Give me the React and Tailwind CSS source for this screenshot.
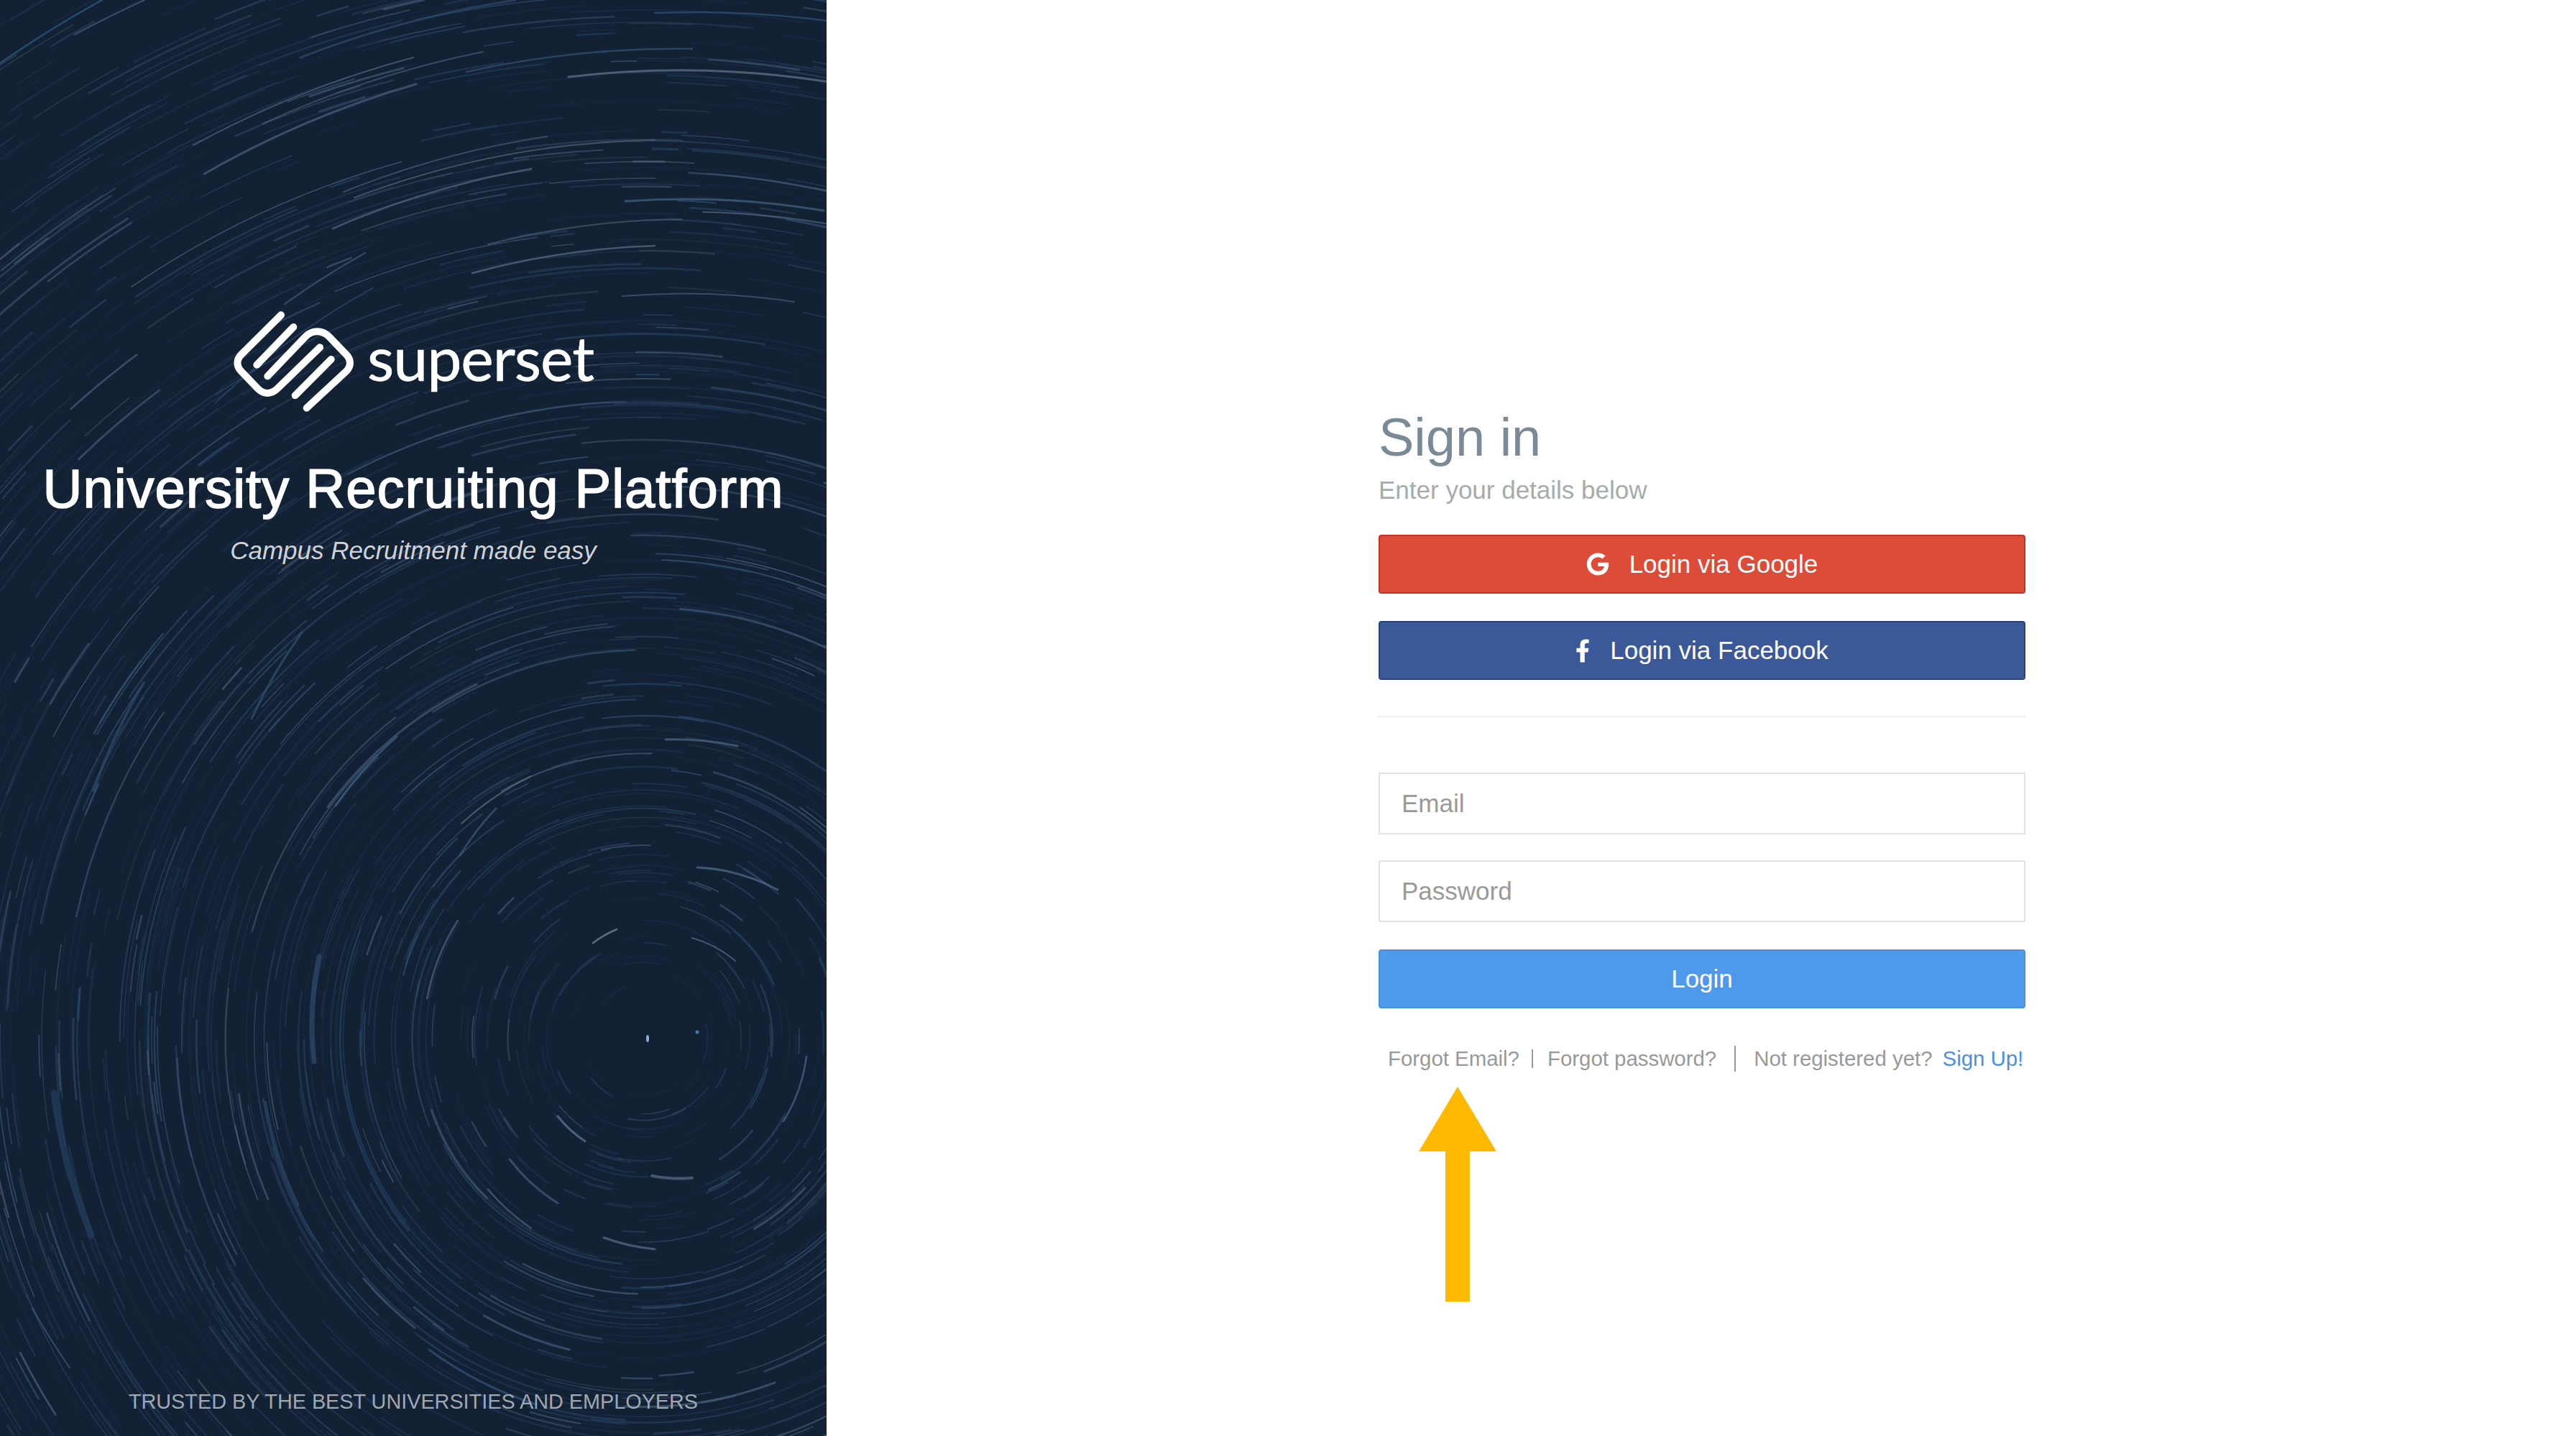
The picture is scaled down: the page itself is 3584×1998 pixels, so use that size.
import React from "react";
import { FaGoogle, FaFacebookF } from "react-icons/fa";

const CX = 895;
const CY = 1445;

const HAND = [
  [0,88,142,0,"#2f5f86",2.5],[104,48,201,0,"#47627c",2],[418,80,717,0,"#2f4a6c",3],[534,13,590,0,"#3f5674",3],
  [269,202,575,80,"#56677c",2],[366,172,672,72,"#4b5d73",2],[284,242,579,117,"#4c6280",3],[791,107,1160,115,"#66788c",3],
  [649,100,963,68,"#345273",2.5],[911,18,1160,30,"#2f5375",2.5],[478,267,761,190,"#4a5d76",2],[493,275,911,195,"#5a6775",2],
  [463,318,739,235,"#5a6a7e",2.5],[870,280,1146,293,"#466583",3],[978,295,1160,313,"#5a6b7f",2],[657,380,911,342,"#5e7086",2.5],
  [679,340,948,305,"#4a5c70",2],[396,423,508,352,"#3d5a7c",2.5],[866,412,1105,420,"#4a5f78",2],[300,560,520,400,"#2c4a6e",2],
  [467,1121,552,1025,"#3f6488",3],[642,1146,739,1080,"#60707c",2],[926,1029,1026,1038,"#4f6a88",3],[825,1312,858,1293,"#7c8da0",2.5],
  [776,1553,814,1588,"#5f7a98",3],[679,1655,739,1709,"#4c6585",2.5],[709,1613,776,1674,"#45607f",3],[840,1722,911,1738,"#5d7189",3],
  [907,1636,963,1639,"#5b6f88",4],[970,1207,1082,1238,"#54708f",3],[963,1305,1023,1337,"#5b7592",2],[597,1878,746,1954,"#34557a",3],
  [45,1820,97,1903,"#3f5d7f",2],[444,1331,437,1477,"#2f4c6e",7],[75,1521,127,1719,"#25405f",9],
  [1122,1470,1090,1560,"#4c6a8a",2.5],[640,1190,690,1125,"#3a5878",3],[350,1000,420,880,"#34536f",3],[130,1100,200,950,"#2e4c6b",4],
];

function arc(x1, y1, x2, y2) {
  const mx = (x1 + x2) / 2;
  const my = (y1 + y2) / 2;
  const r = Math.hypot(mx - CX, my - CY);
  const sweep = (x1 - CX) * (y2 - CY) - (y1 - CY) * (x2 - CX) > 0 ? 1 : 0;
  return `M${x1} ${y1}A${r.toFixed(1)} ${r.toFixed(1)} 0 0 ${sweep} ${x2} ${y2}`;
}

function randomTrails() {
  let seed = 20231;
  const rnd = () => {
    seed = (seed * 16807) % 2147483647;
    return seed / 2147483647;
  };
  const colors = ["#2c4a6e", "#34557a", "#3f5f84", "#4a6585", "#5a6f86", "#27486c"];
  const out = [];
  for (let i = 0; i < 6000; i++) {
    const r = 60 + Math.pow(rnd(), 0.6) * 1850;
    const a = rnd() * Math.PI * 2;
    const len = 30 + rnd() * rnd() * (r < 300 ? 120 : 420);
    const d = len / r;
    const x1 = CX + r * Math.cos(a);
    const y1 = CY + r * Math.sin(a);
    const x2 = CX + r * Math.cos(a + d);
    const y2 = CY + r * Math.sin(a + d);
    const bright = rnd();
    if ((x1 < -50 && x2 < -50) || (x1 > 1200 && x2 > 1200) || (y1 < -50 && y2 < -50) || (y1 > 2050 && y2 > 2050)) continue;
    out.push({
      d: `M${x1.toFixed(1)} ${y1.toFixed(1)}A${r.toFixed(1)} ${r.toFixed(1)} 0 0 1 ${x2.toFixed(1)} ${y2.toFixed(1)}`,
      c: colors[Math.floor(rnd() * colors.length)],
      w: 1.2 + rnd() * 1.8,
      o: (0.1 + bright * bright * 0.5) * Math.min(1, r / 350 + 0.35),
    });
  }
  return out;
}

function StarTrails() {
  const trails = React.useMemo(randomTrails, []);
  return (
    <svg className="absolute inset-0 w-full h-full blur-[0.7px]" viewBox="0 0 1150 1998" preserveAspectRatio="none">
      {trails.map((t, i) => (
        <path key={i} d={t.d} fill="none" stroke={t.c} strokeWidth={t.w} strokeOpacity={t.o} strokeLinecap="round" />
      ))}
      {HAND.map((h, i) => (
        <path key={`h${i}`} d={arc(h[0], h[1], h[2], h[3])} fill="none" stroke={h[4]} strokeWidth={h[5]} strokeLinecap="round" strokeOpacity="0.7" />
      ))}
      <ellipse cx="901" cy="1445" rx="2" ry="5" fill="#8fb0d8" />
      <circle cx="970" cy="1436" r="2.5" fill="#4f78a8" />
    </svg>
  );
}

function Logo() {
  return (
    <svg width="180" height="155" viewBox="0 0 540 465" fill="none" stroke="#fff" strokeWidth="30" strokeLinecap="round" strokeLinejoin="round" className="shrink-0">
      <path d="M213 40 L47 205 C26 226 26 254 47 275 L112 343 C140 373 172 373 200 345 L375 175" />
      <path d="M157 295 L315 130 C343 102 385 102 413 130 L485 205 C506 226 506 254 485 275 L320 428" />
      <path d="M265 90 L112 248" />
      <path d="M422 225 L272 376" />
    </svg>
  );
}

export default function App() {
  return (
    <div className="flex w-full h-[1998px] bg-white font-['Liberation_Sans',sans-serif] overflow-hidden">
      <aside className="relative w-[1150px] h-full shrink-0 overflow-hidden bg-[#122134] flex flex-col items-center text-white">
        <StarTrails />
        <div className="relative flex items-center gap-[11px] mt-[425px] mr-[4px] h-[155px]">
          <Logo />
          <span className="font-['Lato',sans-serif] text-[86px] leading-none tracking-[-1px] -mt-[12px] [-webkit-text-stroke:0.6px_white]">superset</span>
        </div>
        <h1 className="relative mt-[55px] text-[76px] leading-[90px] tracking-[1px] [-webkit-text-stroke:1.6px_white]">University Recruiting Platform</h1>
        <p className="relative mt-[19px] italic text-[35px] leading-[44px] text-[#cfd2d6]">Campus Recruitment made easy</p>
        <p className="relative mt-auto mb-[29px] text-[28.8px] leading-[38px] text-[#a0a7b0]">TRUSTED BY THE BEST UNIVERSITIES AND EMPLOYERS</p>
      </aside>
      <main className="flex-1 pl-[768px]">
        <div className="w-[900px] pt-[569px]">
          <h2 className="h-[80px] text-[74px] leading-[80px] text-[#7b8a97]">Sign in</h2>
          <p className="mt-[11px] h-[44px] text-[35px] leading-[44px] text-[#a6abab]">Enter your details below</p>
          <button className="mt-[40px] w-full h-[82px] flex items-center justify-center gap-[28px] rounded-[4px] border-2 border-[#c23321] bg-[#dd4b39] text-white text-[35px]">
            <FaGoogle className="w-[32px] h-[32px]" />
            <span>Login via Google</span>
          </button>
          <button className="mt-[38px] w-full h-[82px] flex items-center justify-center gap-[28px] rounded-[4px] border-2 border-[#2d4373] bg-[#3b5998] text-white text-[35px]">
            <FaFacebookF className="w-[20px] h-[35px]" />
            <span>Login via Facebook</span>
          </button>
          <hr className="mt-[50px] border-0 h-[2px] bg-[#eeeeee]" />
          <input placeholder="Email" className="mt-[77px] block w-full h-[86px] border-2 border-[#e3e3e3] bg-white px-[30px] text-[35px] placeholder:text-[#999999] outline-none" />
          <input placeholder="Password" className="mt-[36px] block w-full h-[86px] border-2 border-[#e3e3e3] bg-white px-[30px] text-[35px] placeholder:text-[#999999] outline-none" />
          <button className="mt-[38px] w-full h-[82px] rounded-[4px] border-2 border-[#4a90e2] bg-[#4f99ed] text-white text-[35px]">Login</button>
          <div className="mt-[50px] flex items-center h-[40px] text-[29.4px] leading-[40px] text-[#999999] whitespace-nowrap">
            <span className="ml-[13px]">Forgot Email?</span>
            <span className="ml-[17px] w-[2px] h-[26px] bg-[#999999]" />
            <span className="ml-[20px]">Forgot password?</span>
            <span className="ml-[25px] w-[2px] h-[36px] bg-[#999999]" />
            <span className="ml-[25px]">Not registered yet?</span>
            <span className="ml-[14px] text-[#4a90e2]">Sign Up!</span>
          </div>
          <svg width="110" height="299" viewBox="0 0 110 299" className="mt-[19px] ml-[55px]">
            <path d="M55 0 L109 90 L72 90 L72 299 L38 299 L38 90 L1 90 Z" fill="#ffba00" />
          </svg>
        </div>
      </main>
    </div>
  );
}
